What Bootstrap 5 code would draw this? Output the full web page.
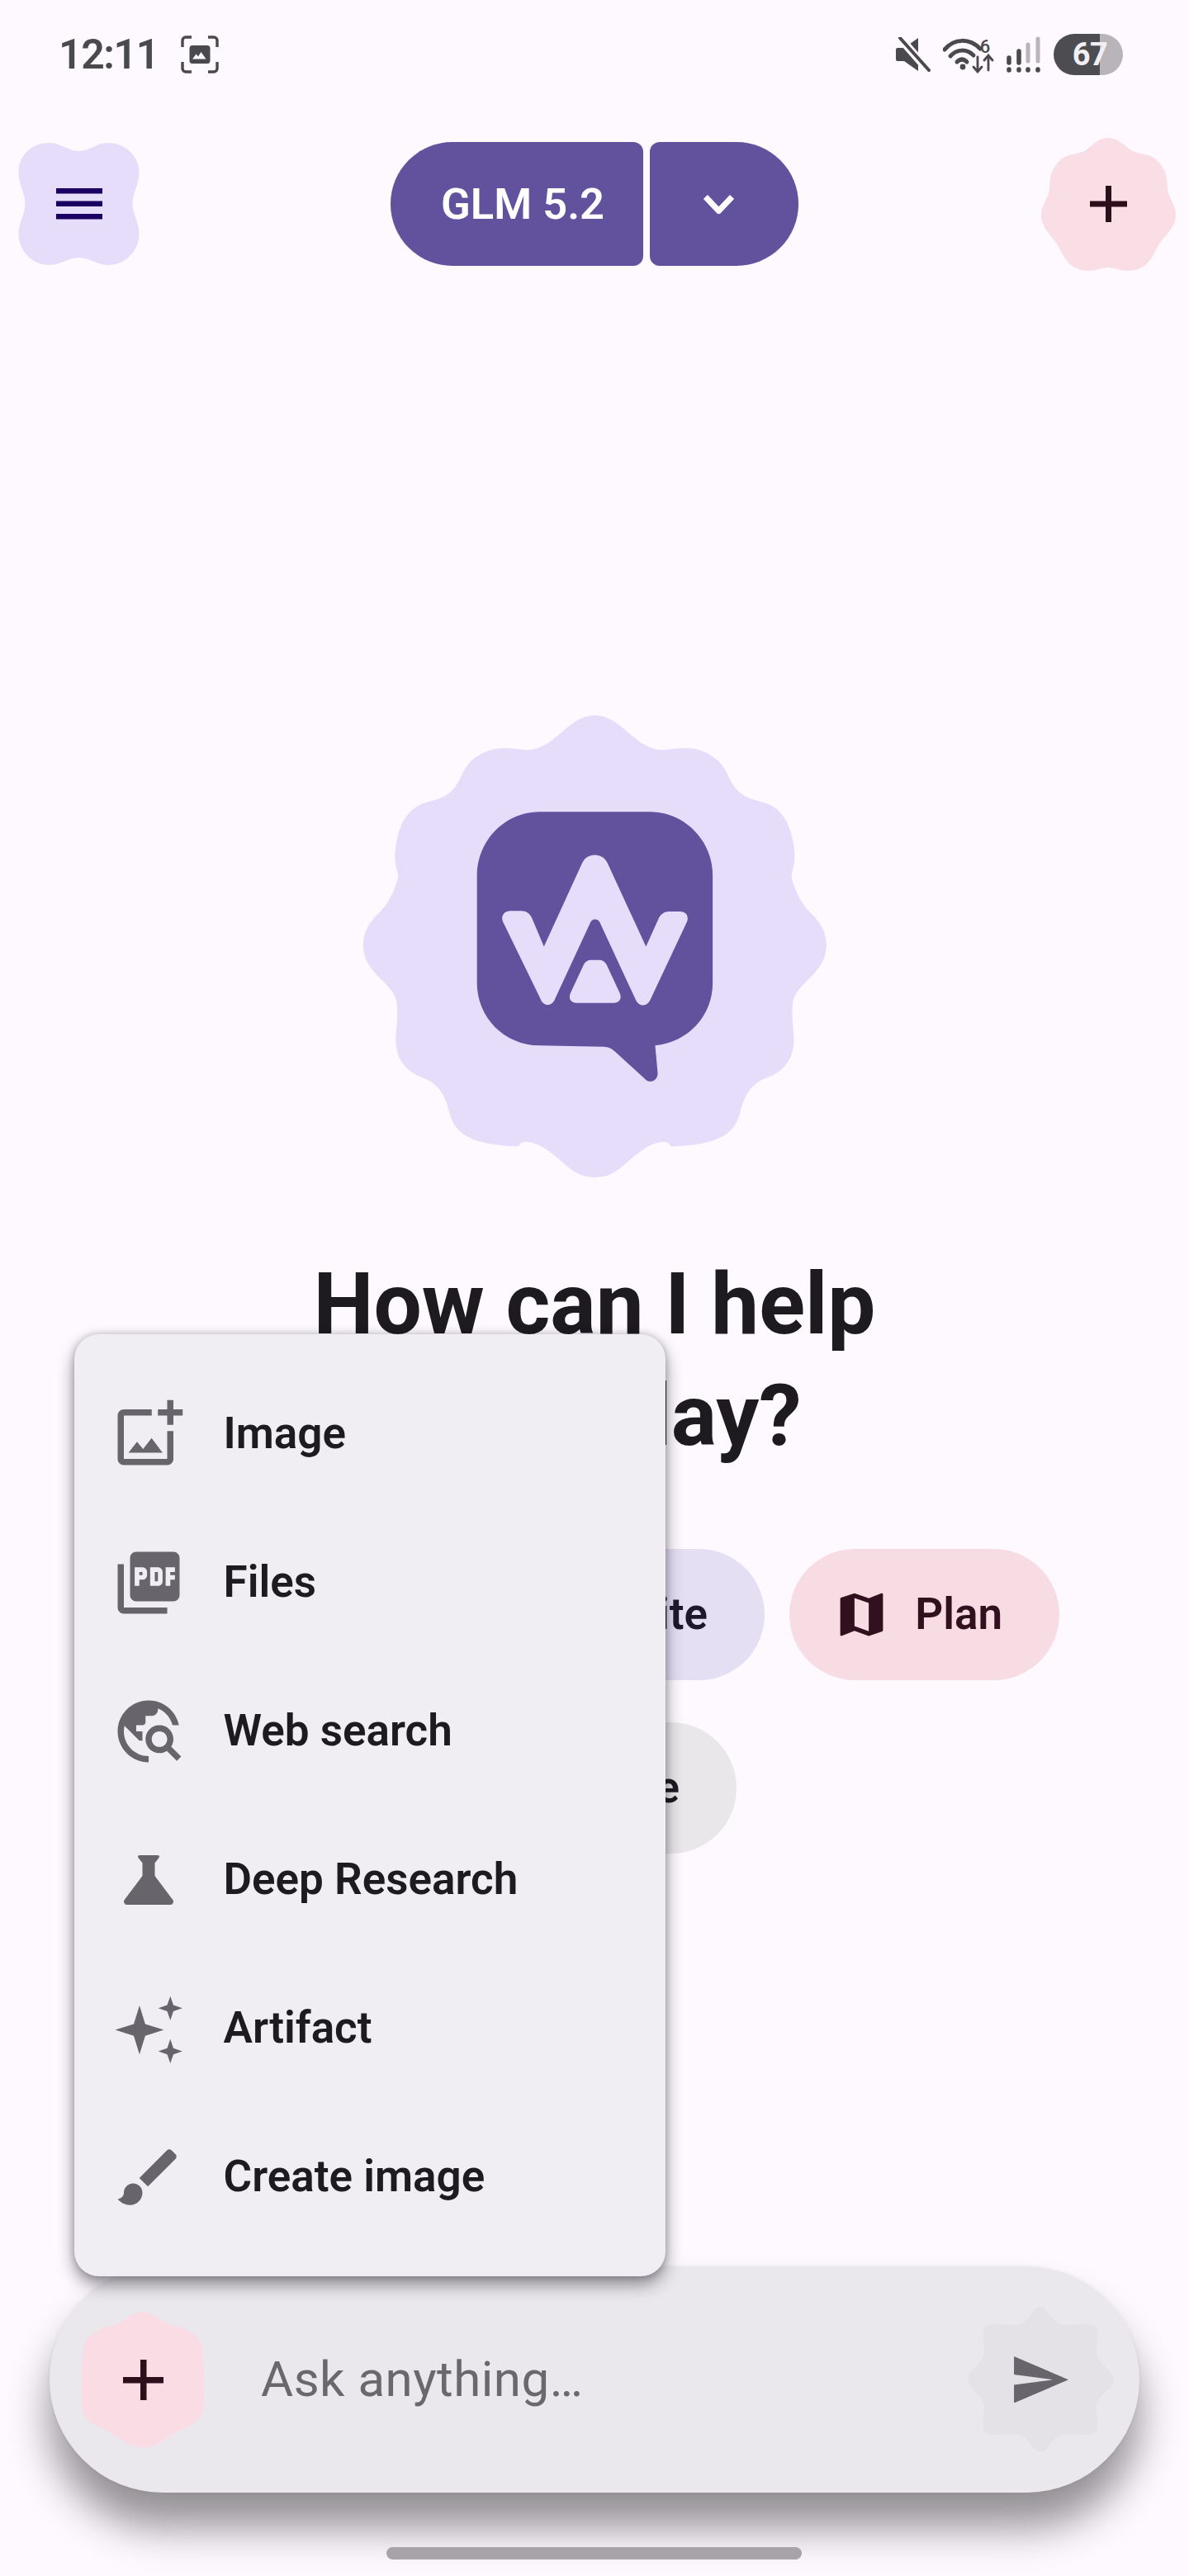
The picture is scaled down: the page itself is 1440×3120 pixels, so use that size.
<!doctype html>
<html lang="en">
<head>
<meta charset="utf-8">
<title>GLM 5.2</title>
<link href="https://cdn.jsdelivr.net/npm/bootstrap@5.3.0/dist/css/bootstrap.min.css" rel="stylesheet">
<style>
html,body{margin:0;background:#fef8ff;}
body{font-family:Roboto,"Liberation Sans",sans-serif;color:#1d1b20;}
.screen{width:1440px;height:3120px;overflow:hidden;position:relative;background:#fef8ff;}
.statusbar{height:132px;padding:0 80px 0 71px;color:#4a494d;}
.clock{font-size:50px;font-weight:600;line-height:1;letter-spacing:-1.4px;margin-right:27px;}
.status-right{gap:15px;}
.batt{width:84px;height:50px;border-radius:25px;background:linear-gradient(90deg,#4d4c50 0 66.5%,#b8b4ba 66.5% 100%);color:#f1eff3;font-size:38px;font-weight:700;line-height:50px;text-align:center;padding-left:4px;letter-spacing:-.5px;margin-left:1px;}
.topbar{display:grid;grid-template-columns:1fr auto 1fr;align-items:center;margin-top:34px;padding:0 16px;height:162px;}
.blob-btn{position:relative;display:flex;align-items:center;justify-content:center;flex:none;}
.blob-btn>svg.shape{position:absolute;inset:0;width:100%;height:100%;}
.blob-btn>svg.glyph{position:relative;}
.blob-menu{width:147px;height:150px;margin-left:6px;}
.blob-new{width:163px;height:161px;justify-self:end;}
.pillbtns{gap:8px;}
.modelbtn{background:#62519c;color:#fff;border:0;height:150px;display:flex;align-items:center;font-size:52.5px;font-weight:600;}
.modelbtn:hover{background:#62519c;color:#fff;}
.m-left{width:306px;padding:0 0 0 61px;border-radius:75px 12px 12px 75px;}
.m-right{width:180px;padding:0 0 0 65px;border-radius:12px 75px 75px 12px;}
.hero-wrap{margin-top:522px;}
.hero-blob{width:600px;height:600px;display:block;}
.hero-title{font-size:103.4px;font-weight:700;line-height:135px;margin:62px 0 0;color:#1d1b20;}
.chips{margin-top:94px;gap:51px;}
.chip-a{padding-right:157px;gap:30px;}
.chipx{height:159px;border-radius:80px;display:flex;align-items:center;padding:0 69px 0 53px;gap:30px;font-size:53px;font-weight:600;}
.chipx svg{width:69px;height:69px;flex:none;fill:currentColor;}
.c-write{background:#e5dff4;color:#1d192b;}
.c-plan{background:#f8dce3;color:#31111d;}
.c-code{background:#e9e7ea;color:#1d1b20;}
.popmenu{position:absolute;display:block;left:90px;top:1616px;width:716px;height:1141px;padding:31px 0 30px;margin:0;border:0;border-radius:30px;background:#f1eef3;box-shadow:0 10px 20px rgba(20,18,26,.45),0 0 8px rgba(20,18,26,.22);z-index:5;}
.popmenu .dropdown-item{height:180px;display:flex;align-items:center;gap:46px;padding:0 0 0 44.5px;font-size:53px;font-weight:600;color:#1d1b20;}
.popmenu .dropdown-item:hover{background:transparent;}
.popmenu svg{width:90px;height:90px;flex:none;fill:#67646b;}
.composer{position:absolute;left:60px;top:2745px;width:1320px;height:274px;border-radius:137px;background:#ebe8ed;box-shadow:0 42px 50px rgba(0,0,0,.42),0 0 5px rgba(0,0,0,.06);padding:0 31px 0 38px;}
.blob-add{width:150px;height:165px;}
.ask{margin-left:68px;font-size:60px;font-weight:400;color:#6a676d;line-height:1;letter-spacing:.5px;}
.blob-send{width:177px;height:176px;}
.homebar{position:absolute;left:468px;top:3085px;width:503px;height:15px;border-radius:8px;background:#a7a3a8;z-index:2;}
</style>
</head>
<body>
<div class="screen">
  <div class="statusbar d-flex align-items-center justify-content-between">
    <div class="d-flex align-items-center">
      <span class="clock">12:11</span>
      <svg width="46" height="46" viewBox="0 0 46 46" fill="none"><path d="M2 14V6a4 4 0 0 1 4-4h7M33 2h7a4 4 0 0 1 4 4v8M44 32v8a4 4 0 0 1-4 4h-7M13 44H6a4 4 0 0 1-4-4v-8" stroke="#4a494d" stroke-width="3.4"/><rect x="10.5" y="12" width="25" height="22" rx="3.5" fill="#4a494d"/><path d="M14 28.5l4.5-6 2.5 3 3.5-5.5 6 8.500z" fill="#fef8ff"/></svg>
    </div>
    <div class="d-flex align-items-center status-right">
      <svg width="42" height="42" viewBox="0 0 42 42"><path d="M0 15a2 2 0 0 1 2-2h8L27 1v40L10 29H2a2 2 0 0 1-2-2z" fill="#4a494d"/><path d="M4 0l37 42" stroke="#fef8ff" stroke-width="10"/><path d="M5 1l35 39" stroke="#4a494d" stroke-width="4" stroke-linecap="round"/></svg>
      <svg width="62" height="46" viewBox="0 0 62 46" fill="none" stroke="#4a494d" stroke-linecap="round"><path d="M2 17C14 3 32 3 45 16" stroke-width="5"/><path d="M9 25C17 16 29 16 37 24" stroke-width="5"/><path d="M17 32c4-4 8-4 12 0" stroke-width="5"/><circle cx="24" cy="38" r="3.400" fill="#4a494d" stroke="none"/><path d="M42 26v18m-5-6l5 6 5-6M55 42V24m-5 6l5-6 5 6" stroke-width="2.800"/><text x="51" y="21" font-family="Roboto,sans-serif" font-size="22" font-weight="500" fill="#4a494d" stroke="none" text-anchor="middle">6</text></svg>
      <svg width="41" height="44" viewBox="0 0 41 44" fill="none" stroke-linecap="round" stroke-width="5"><path d="M3 26v6M3 40v1M15 18v14M15 40v1M26 40v1M38 40v1" stroke="#4a494d" stroke-width="5.500"/><path d="M26 10v20M38 3v27" stroke="#b8b4ba"/></svg>
      <div class="batt">67</div>
    </div>
  </div>

  <div class="topbar">
    <div class="blob-btn blob-menu" aria-label="Menu">
      <svg class="shape" viewBox="0 0 147 151"><path fill="#e6ddfb" d="M73.500 11C60 11 52 1 37.700 1C14 1 0 18 0 37C0 52 8 62 8 75C8 88 0 98 0 112C0 132 16 150 37.700 150C52 150 60 141 73.500 141C87 141 95 150 109 150C131 150 147 132 147 112C147 98 139 88 139 75C139 62 147 52 147 37C147 18 131 1 109 1C95 1 87 11 73.500 11Z"/></svg>
      <svg class="glyph" width="56" height="38" viewBox="0 0 56 38" fill="#1b0063"><rect y="0" width="56" height="6.500"/><rect y="15.500" width="56" height="6.500"/><rect y="31" width="56" height="6.500"/></svg>
    </div>
    <div class="d-flex pillbtns">
      <button type="button" class="btn modelbtn m-left">GLM 5.2</button>
      <button type="button" class="btn modelbtn m-right" aria-label="Choose model"><svg width="37" height="23" viewBox="0 0 37 23" fill="none" stroke="#fff" stroke-width="7"><path d="M2.500 2.500l16 17 16-17"/></svg></button>
    </div>
    <div class="blob-btn blob-new" aria-label="New chat">
      <svg class="shape" viewBox="0 0 163 161"><path fill="#f9dfe5" d="M81 0C95 0 103 12 111 16C122 21 133 19 141 28C150 37 153 47 153 60C153 72 163 80 163 94C163 108 150 118 142 130C135 142 130 161 104 161C95 161 90 157 81 157C72 157 67 161 58 161C32 161 27 142 20 130C12 118 0 108 0 94C0 80 10 72 10 60C10 47 13 37 22 28C30 19 41 21 52 16C60 12 67 0 81 0Z"/></svg>
      <svg class="glyph" width="45" height="44" viewBox="0 0 45 44" fill="#2d0f1c"><rect x="19" width="7" height="44"/><rect y="18.500" width="45" height="7"/></svg>
    </div>
  </div>

  <div class="hero-wrap d-flex flex-column align-items-center text-center">
    <svg class="hero-blob" viewBox="0 0 1568 1568" aria-hidden="true">
      <g fill="#e6ddfb">
        <path d="M785 43C835 43 870 80 900 105S965 155 1005 152C1050 147 1090 140 1130 158S1190 195 1210 240S1260 305 1305 315S1395 350 1412 440S1400 530 1410 565S1440 640 1465 665S1518 720 1518 770S1490 850 1450 890S1410 950 1410 990S1420 1060 1412 1100S1380 1170 1330 1190S1260 1240 1245 1300S1190 1390 1090 1403S1040 1395 1005 1393S930 1420 890 1455S830 1505 785 1505L778 1505L778 43Z"/>
        <path transform="matrix(-1 0 0 1 1570 0)" d="M785 43C835 43 870 80 900 105S965 155 1005 152C1050 147 1090 140 1130 158S1190 195 1210 240S1260 305 1305 315S1395 350 1412 440S1400 530 1410 565S1440 640 1465 665S1518 720 1518 770S1490 850 1450 890S1410 950 1410 990S1420 1060 1412 1100S1380 1170 1330 1190S1260 1240 1245 1300S1190 1390 1090 1403S1040 1395 1005 1393S930 1420 890 1455S830 1505 785 1505L778 1505L778 43Z"/>
      </g>
      <path fill="#62519c" d="M610 348H960C1070 348 1158 440 1158 550V890C1158 995 1080 1078 976 1088L984 1175C985 1198 960 1210 945 1195L850 1108C835 1095 825 1092 805 1092L610 1088C500 1088 412 1000 412 890V550C412 440 500 348 610 348Z"/>
      <path fill="#e6ddfb" d="M495 698C486 680 497 662 518 662H552C568 662 579 670 586 685L624 775L745 510C753 494 768 485 785 485C802 485 817 494 825 510L947 775L987 686C994 672 1005 664 1020 664H1056C1074 664 1084 680 1076 698L962 940C952 966 924 968 913 940L803 703C797 684 775 684 769 703L660 938C650 966 622 966 612 938Z"/>
      <path fill="#e6ddfb" d="M708 922L750 832C755 822 762 817 775 817H798C810 817 817 822 822 832L864 922C872 940 862 953 845 953H727C710 953 700 940 708 922Z"/>
    </svg>
    <h1 class="hero-title">How can I help<br>you today?</h1>
  </div>

  <div class="chips d-flex flex-column">
    <div class="d-flex justify-content-end chip-a">
      <div class="chipx c-write"><svg viewBox="0 0 24 24"><path d="M3 17.250V21h3.750L17.810 9.940l-3.750-3.750L3 17.250zM20.710 7.040a1 1 0 0 0 0-1.410l-2.340-2.340a1 1 0 0 0-1.410 0l-1.830 1.830 3.750 3.750 1.830-1.830z"/></svg><span>Write</span></div>
      <div class="chipx c-plan"><svg viewBox="0 0 24 24"><path d="M20.500 3l-.16.03L15 5.100 9 3 3.360 4.900c-.21.070-.36.250-.36.480V20.500c0 .280.220.500.500.500l.16-.03L9 18.900l6 2.100 5.640-1.900c.21-.07.360-.250.360-.480V3.500c0-.280-.220-.500-.500-.500zM15 19l-6-2.110V5l6 2.110V19z"/></svg><span>Plan</span></div>
    </div>
    <div class="d-flex justify-content-center">
      <div class="chipx c-code"><svg viewBox="0 0 24 24"><path d="M9.400 16.600L4.800 12l4.600-4.600L8 6l-6 6 6 6 1.400-1.400zm5.200 0l4.600-4.600-4.600-4.600L16 6l6 6-6 6-1.400-1.400z"/></svg><span>Code</span></div>
    </div>
  </div>

  <div class="dropdown-menu popmenu show">
    <div class="dropdown-item"><svg viewBox="0 0 24 24"><path d="M18 20H4V6h9V4H4c-1.100 0-2 .900-2 2v14c0 1.100.900 2 2 2h14c1.100 0 2-.900 2-2v-9h-2v9zm-7.790-3.170l-1.960-2.360L5.500 18h11l-3.540-4.710zM20 4V1h-2v3h-3c.010.010 0 2 0 2h3v2.990c.010.010 2 0 2 0V6h3V4h-3z"/></svg><span>Image</span></div>
    <div class="dropdown-item"><svg viewBox="0 0 24 24"><path d="M20 2H8c-1.100 0-2 .900-2 2v12c0 1.100.900 2 2 2h12c1.100 0 2-.900 2-2V4c0-1.100-.900-2-2-2zm-8.500 7.500c0 .830-.670 1.500-1.500 1.500H9v2H7.500V7H10c.830 0 1.500.670 1.500 1.500v1zm5 2c0 .830-.670 1.500-1.500 1.500h-2.500V7H15c.830 0 1.500.670 1.500 1.500v3zm4-3H19v1h1.500V11H19v2h-1.500V7h3v1.500zM9 9.500h1v-1H9v1zM4 6H2v14c0 1.100.900 2 2 2h14v-2H4V6zm10 5.500h1v-3h-1v3z"/></svg><span>Files</span></div>
    <div class="dropdown-item"><svg viewBox="0 0 24 24"><path d="M19.300 16.900c.400-.700.700-1.500.700-2.400 0-2.500-2-4.500-4.500-4.500S11 12 11 14.500s2 4.500 4.500 4.500c.900 0 1.700-.300 2.400-.700l3.200 3.200 1.400-1.400-3.200-3.200zm-3.800.100c-1.400 0-2.500-1.100-2.500-2.500s1.100-2.500 2.500-2.500 2.500 1.100 2.500 2.500-1.100 2.500-2.500 2.500zM12 20v2C6.480 22 2 17.520 2 12S6.480 2 12 2c4.840 0 8.870 3.440 9.800 8h-2.070c-.640-2.460-2.400-4.470-4.730-5.410V5c0 1.100-.900 2-2 2h-2v2c0 .550-.450 1-1 1H8v2h2v3H9l-4.790-4.790C4.080 10.790 4 11.380 4 12c0 4.410 3.590 8 8 8z"/></svg><span>Web search</span></div>
    <div class="dropdown-item"><svg viewBox="0 0 24 24"><path d="M19.800 18.400L14 10.670V6.500l1.350-1.690c.260-.330.030-.810-.390-.810H9.040c-.420 0-.650.480-.390.810L10 6.500v4.170L4.200 18.400c-.490.660-.020 1.600.800 1.600h14c.820 0 1.290-.940.800-1.600z"/></svg><span>Deep Research</span></div>
    <div class="dropdown-item"><svg viewBox="0 0 24 24"><path d="M9.050 4.500L10.900 10.500L16.900 12.400L10.900 14.300L9.050 20.300L7.200 14.300L1.200 12.400L7.200 10.500Z"/><path d="M19 1.500L20 4.400L22.900 5.400L20 6.400L19 9.300L18 6.400L15.100 5.400L18 4.400Z"/><path d="M19 15.400L20 18.300L22.900 19.300L20 20.300L19 23.200L18 20.300L15.100 19.300L18 18.300Z"/></svg><span>Artifact</span></div>
    <div class="dropdown-item"><svg viewBox="0 0 24 24"><path d="M7 14c-1.660 0-3 1.340-3 3 0 1.310-1.160 2-2 2 .920 1.220 2.490 2 4 2 2.210 0 4-1.790 4-4 0-1.660-1.340-3-3-3zm13.710-9.370l-1.340-1.340c-.390-.390-1.020-.390-1.410 0L9 12.250 11.750 15l8.960-8.960c.390-.390.390-1.030 0-1.410z"/></svg><span>Create image</span></div>
  </div>

  <div class="composer d-flex align-items-center">
    <div class="blob-btn blob-add" aria-label="Add">
      <svg class="shape" viewBox="0 0 150 165"><path fill="#fadde4" d="M75 0C88 0 95 10 105 14C122 20 140 22 146 40C150 55 150 110 148 120C144 136 125 140 112 148C100 155 90 165 75 165C60 165 50 155 38 148C25 140 6 136 2 120C0 110 0 55 4 40C10 22 28 20 45 14C55 10 62 0 75 0Z"/></svg>
      <svg class="glyph" width="49" height="49" viewBox="0 0 49 49" fill="#2d0f1c"><rect x="21" width="7.500" height="49"/><rect y="21" width="49" height="7.500"/></svg>
    </div>
    <span class="ask">Ask anything…</span>
    <div class="blob-btn blob-send ms-auto" aria-label="Send">
      <svg class="shape" viewBox="0 0 177 176"><path fill="#e5e2e7" d="M88 0C96 0 100 14 110 20C122 24 148 18 155 23C160 30 154 50 157 60C160 70 177 78 177 88C177 98 160 106 157 116C154 126 160 146 155 153C148 158 122 152 110 156C100 162 96 176 88 176C80 176 76 162 66 156C54 152 28 158 21 153C16 146 22 126 19 116C16 106 0 98 0 88C0 78 16 70 19 60C22 50 16 30 21 23C28 18 54 24 66 20C76 14 80 0 88 0Z"/></svg>
      <svg class="glyph" width="66" height="56.500" viewBox="2 3 21 18" fill="#67646b"><path d="M2.010 21L23 12 2.010 3 2 10l15 2-15 2z"/></svg>
    </div>
  </div>
  <div class="homebar"></div>
</div>
<script src="https://cdn.jsdelivr.net/npm/bootstrap@5.3.0/dist/js/bootstrap.bundle.min.js"></script>
</body>
</html>
